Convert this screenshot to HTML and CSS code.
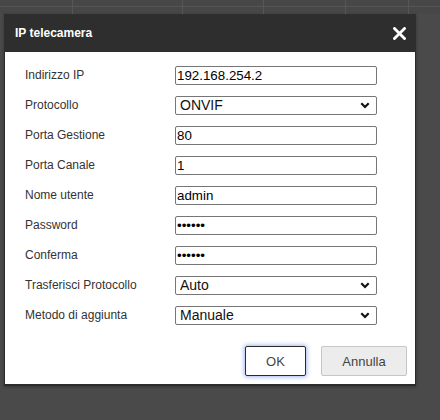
FILE: index.html
```html
<!DOCTYPE html>
<html lang="it">
<head>
<meta charset="utf-8">
<title>IP telecamera</title>
<link rel="stylesheet" href="styles.css">
</head>
<body>
<div class="sheet">
  <div class="col c1"></div><div class="col c2"></div><div class="col c3"></div><div class="col c4"></div><div class="col c5"></div><div class="col c6"></div>
</div>
<div class="dialog">
  <div class="header">
    <span class="title">IP telecamera</span>
    <svg class="close" width="13" height="13" viewBox="0 0 13 13"><path d="M1.5 1.5 L11.5 11.5 M11.5 1.5 L1.5 11.5" stroke="#fff" stroke-width="2.8" stroke-linecap="square"/></svg>
  </div>
  <div class="body">
    <div class="form">
      <label class="lbl">Indirizzo IP</label>
      <div class="ctl"><input class="field" type="text" value="192.168.254.2"></div>
      <label class="lbl">Protocollo</label>
      <div class="ctl sel"><select class="field"><option>ONVIF</option></select><svg class="chev" width="10" height="7" viewBox="0 0 10 7"><path d="M1.3 1.3 L5 5 L8.7 1.3" fill="none" stroke="#111" stroke-width="2.2"/></svg></div>
      <label class="lbl">Porta Gestione</label>
      <div class="ctl"><input class="field" type="text" value="80"></div>
      <label class="lbl">Porta Canale</label>
      <div class="ctl"><input class="field" type="text" value="1"></div>
      <label class="lbl">Nome utente</label>
      <div class="ctl"><input class="field" type="text" value="admin"></div>
      <label class="lbl">Password</label>
      <div class="ctl"><input class="field" type="password" value="123456"></div>
      <label class="lbl">Conferma</label>
      <div class="ctl"><input class="field" type="password" value="123456"></div>
      <label class="lbl">Trasferisci Protocollo</label>
      <div class="ctl sel"><select class="field"><option>Auto</option></select><svg class="chev" width="10" height="7" viewBox="0 0 10 7"><path d="M1.3 1.3 L5 5 L8.7 1.3" fill="none" stroke="#111" stroke-width="2.2"/></svg></div>
      <label class="lbl">Metodo di aggiunta</label>
      <div class="ctl sel"><select class="field"><option>Manuale</option></select><svg class="chev" width="10" height="7" viewBox="0 0 10 7"><path d="M1.3 1.3 L5 5 L8.7 1.3" fill="none" stroke="#111" stroke-width="2.2"/></svg></div>
    </div>
    <div class="buttons">
      <button class="btn ok">OK</button>
      <button class="btn cancel">Annulla</button>
    </div>
  </div>
</div>
</body>
</html>
```
FILE: styles.css
```css
html, body {
  margin: 0;
  padding: 0;
}
body {
  background: #4a4a4a;
  width: 440px;
  height: 420px;
  overflow: hidden;
  font-family: Arial, "Liberation Sans", sans-serif;
}
.sheet {
  height: 14px;
  display: flex;
  background: linear-gradient(#474747 0 6px, #555 6px 7px, #474747 7px);
}
.col {
  border-right: 1px solid #565656;
  height: 14px;
}
.c1 { width: 72px; }
.c2 { width: 109px; }
.c3 { width: 80px; }
.c4 { width: 81px; }
.c5 { width: 62px; }
.c6 { flex: 1; border-right: none; }
.dialog {
  margin-left: 4px;
  width: 410px;
  border: 1px solid #2b2b2b;
  border-top: none;
  border-bottom-width: 2px;
  background: #fff;
  box-shadow: 0 1px 3px rgba(0,0,0,0.3);
}
.header {
  height: 38px;
  background: #2e2e2e;
  display: flex;
  align-items: center;
  justify-content: space-between;
  padding: 0 10px 0 10px;
  margin: 0 -1px;
}
.title {
  color: #fff;
  font-weight: bold;
  font-size: 12px;
  padding-left: 1px;
}
.close {
  display: block;
  margin-right: 0px;
}
.body {
  padding: 8px 8px 8px 0;
}
.form {
  display: grid;
  grid-template-columns: 150px 202px;
  grid-auto-rows: 30px;
  padding-left: 20px;
  align-items: center;
}
.lbl {
  font-size: 12px;
  color: #333;
}
.ctl {
  position: relative;
  height: 19px;
}
.field {
  box-sizing: border-box;
  width: 202px;
  height: 19px;
  margin: 0;
  border: 1px solid #767676;
  border-radius: 2px;
  padding: 0 1px;
  font-family: Arial, "Liberation Sans", sans-serif;
  font-size: 13.333px;
  color: #000;
  background: #fff;
  outline: none;
}
select.field {
  -webkit-appearance: none;
  appearance: none;
  padding: 0 4px;
  line-height: 17px;
  font-size: 14px;
  color: #111;
}
.chev {
  position: absolute;
  right: 7px;
  top: 6px;
  pointer-events: none;
}
.buttons {
  display: flex;
  justify-content: flex-end;
  gap: 15px;
  margin-top: 16px;
}
.btn {
  box-sizing: border-box;
  height: 30px;
  font-family: Arial, "Liberation Sans", sans-serif;
  font-size: 13px;
  color: #444;
  border-radius: 2px;
  padding: 0;
}
.ok {
  width: 61px;
  background: #fff;
  border: 1px solid #2a2a2a;
  box-shadow: 0 0 4px 1px rgba(90,120,230,0.55);
}
.cancel {
  width: 86px;
  background: #ececec;
  border: 1px solid #c6c6c6;
}
```
